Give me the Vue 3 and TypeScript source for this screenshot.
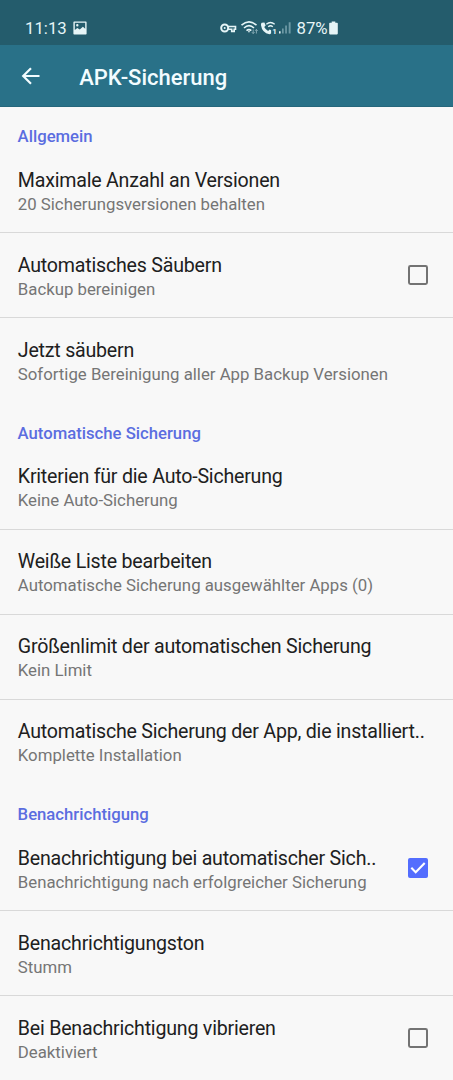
<script setup lang="ts">
interface Item {
  title: string
  summary: string
  checked?: boolean
}
interface Section {
  name: string
  items: Item[]
}

const sections: Section[] = [
  {
    name: 'Allgemein',
    items: [
      { title: 'Maximale Anzahl an Versionen', summary: '20 Sicherungsversionen behalten' },
      { title: 'Automatisches Säubern', summary: 'Backup bereinigen', checked: false },
      { title: 'Jetzt säubern', summary: 'Sofortige Bereinigung aller App Backup Versionen' },
    ],
  },
  {
    name: 'Automatische Sicherung',
    items: [
      { title: 'Kriterien für die Auto-Sicherung', summary: 'Keine Auto-Sicherung' },
      { title: 'Weiße Liste bearbeiten', summary: 'Automatische Sicherung ausgewählter Apps (0)' },
      { title: 'Größenlimit der automatischen Sicherung', summary: 'Kein Limit' },
      { title: 'Automatische Sicherung der App, die installiert..', summary: 'Komplette Installation' },
    ],
  },
  {
    name: 'Benachrichtigung',
    items: [
      { title: 'Benachrichtigung bei automatischer Sich..', summary: 'Benachrichtigung nach erfolgreicher Sicherung', checked: true },
      { title: 'Benachrichtigungston', summary: 'Stumm' },
      { title: 'Bei Benachrichtigung vibrieren', summary: 'Deaktiviert', checked: false },
    ],
  },
]
</script>

<template>
  <div class="screen">
    <div class="status">
      <span class="time">11:13</span>
      <svg class="picture" width="14" height="14" viewBox="0 0 14 14">
        <path fill="#e6f5f7" fill-rule="evenodd" d="M1.200 0.400h11.600q.8 0 .8.800v11.600q0 .8-.8.800H1.200q-.8 0-.8-.8V1.200q0-.8.8-.8zM1.800 1.800v7.200l2.500-2 2.500 1.600 3.100-2.900 2.300 2V1.800zM4.300 3a1.200 1.200 0 1 1 0 2.400a1.200 1.200 0 1 1 0-2.400z" />
      </svg>
      <svg class="signals" width="74" height="16" viewBox="0 0 74 16">
        <g fill="none" stroke="#e6f5f7">
          <circle cx="4.700" cy="8" r="3.500" stroke-width="2" />
          <circle cx="4.700" cy="8" r="1" fill="#e6f5f7" stroke="none" />
          <path d="M7.500 6.500h8v2.700h-1.300v2.200h-2.500V9.200H7.500" stroke-width="1.600" />
          <g stroke-width="1.600">
            <path d="M21.500 5.200Q29 -1.400 36.500 5.200" />
            <path d="M24 8Q29 3.400 34 8" />
            <path d="M26.500 10.600Q29 8.600 31.300 10.600" />
          </g>
          <path d="M33.200 9.500v4M31.900 12.200l1.300 1.400 1.300-1.400M36.400 13.500v-4M35.100 10.800l1.300-1.400 1.300 1.400" stroke="#8eb1bb" stroke-width=".9" />
          <path d="M46.300 4.300Q50.500 .7 54.700 4.300M48.200 6.700Q50.500 4.700 52.800 6.700" stroke-width="1.300" />
        </g>
        <path fill="#e6f5f7" d="M41.700 2.700l2.700-.3 1.300 3.200-1.500 1.500q1.400 2.600 3.900 3.900l1.500-1.500 1.500.7v3.100q-.7 1-1.600 1Q42 12.700 41 5.200q-.1-1.900.7-2.500zM28 11.100h1.900L29 13z" />
        <text x="52.200" y="14" class="sim">1</text>
        <path fill="#e6f5f7" d="M59 11.300h1.600v2.300H59z" />
        <path fill="#6e9aa6" d="M62 8.600h1.700v5H62zM65.200 5.600h1.700v8h-1.700zM68.700 2.200h1.900v11.400h-1.900z" />
      </svg>
      <span class="percent">87%</span>
      <svg class="battery" width="9" height="14" viewBox="0 0 9 14">
        <path fill="#e6f5f7" d="M2.700 0.500h3.600v1.300h1.700q.8 0 .8.800v10q0 .8-.8.800H1q-.8 0-.8-.8V2.600q0-.8.8-.8h1.700z" />
      </svg>
    </div>
    <header class="bar">
      <svg class="back" width="20" height="20" viewBox="0 0 20 20">
        <path d="M18.500 10H2.200M10 2.200L2.200 10l7.800 7.800" fill="none" stroke="#f2fcff" stroke-width="2.200" />
      </svg>
      <h1>APK-Sicherung</h1>
    </header>
    <section v-for="section in sections" :key="section.name">
      <h2>{{ section.name }}</h2>
      <div v-for="item in section.items" :key="item.title" class="row">
        <div class="copy">
          <div class="title">{{ item.title }}</div>
          <div class="summary">{{ item.summary }}</div>
        </div>
        <svg v-if="item.checked !== undefined" class="check" width="22" height="22" viewBox="0 0 22 22">
          <template v-if="item.checked">
            <rect x="1" y="1" width="20" height="20" rx="2" fill="#536dfe" />
            <path d="M4.300 10.800l4.400 4.400 9-9.100" fill="none" stroke="#fff" stroke-width="2.100" />
          </template>
          <rect v-else x="2" y="2" width="18" height="18" rx="1.400" fill="none" stroke="#737373" stroke-width="2" />
        </svg>
      </div>
    </section>
  </div>
</template>

<style>
html,
body {
  margin: 0;
  background: #f8f8f8;
}
</style>

<style scoped>
.screen {
  width: 453px;
  height: 1080px;
  overflow: hidden;
  background: #f8f8f8;
  font-family: Roboto, "Liberation Sans", sans-serif;
  color: #202020;
}
.status {
  box-sizing: border-box;
  height: 45px;
  padding: 11px 0 0 25px;
  display: flex;
  align-items: center;
  background: #245c6c;
  color: #e6f5f7;
  font-size: 16.800px;
}
.time {
  width: 48px;
}
.signals {
  margin-left: 133px;
}
.sim {
  font-size: 8px;
  font-weight: 700;
  fill: #e6f5f7;
}
.percent {
  width: 32px;
  margin-left: 2.500px;
}
.battery {
  margin-left: .5px;
}
.bar {
  box-sizing: border-box;
  height: 62px;
  padding-left: 21px;
  display: flex;
  align-items: center;
  background: #297188;
  border-bottom: 1px solid #26677c;
}
h1 {
  margin: 4px 0 0 38.200px;
  font-size: 22px;
  line-height: 28px;
  font-weight: 500;
  color: #f2fcff;
}
h2 {
  margin: 0;
  height: 41.400px;
  padding: 19.200px 0 0 17.600px;
  box-sizing: border-box;
  font-size: 16.700px;
  line-height: 22px;
  font-weight: 500;
  color: #5b6de0;
}
.row {
  box-sizing: border-box;
  height: 85px;
  padding: 19.500px 24px 0 17.800px;
  display: flex;
  justify-content: space-between;
  border-bottom: 1px solid #d9d9d9;
}
.row:last-child {
  border-bottom-color: transparent;
}
.title {
  font-size: 19.600px;
  letter-spacing: -.21px;
  line-height: 26px;
  white-space: nowrap;
}
.summary {
  margin-top: -1px;
  font-size: 16.790px;
  line-height: 22px;
  color: #757575;
  white-space: nowrap;
}
.check {
  margin-top: 11.500px;
  flex: none;
}
</style>
